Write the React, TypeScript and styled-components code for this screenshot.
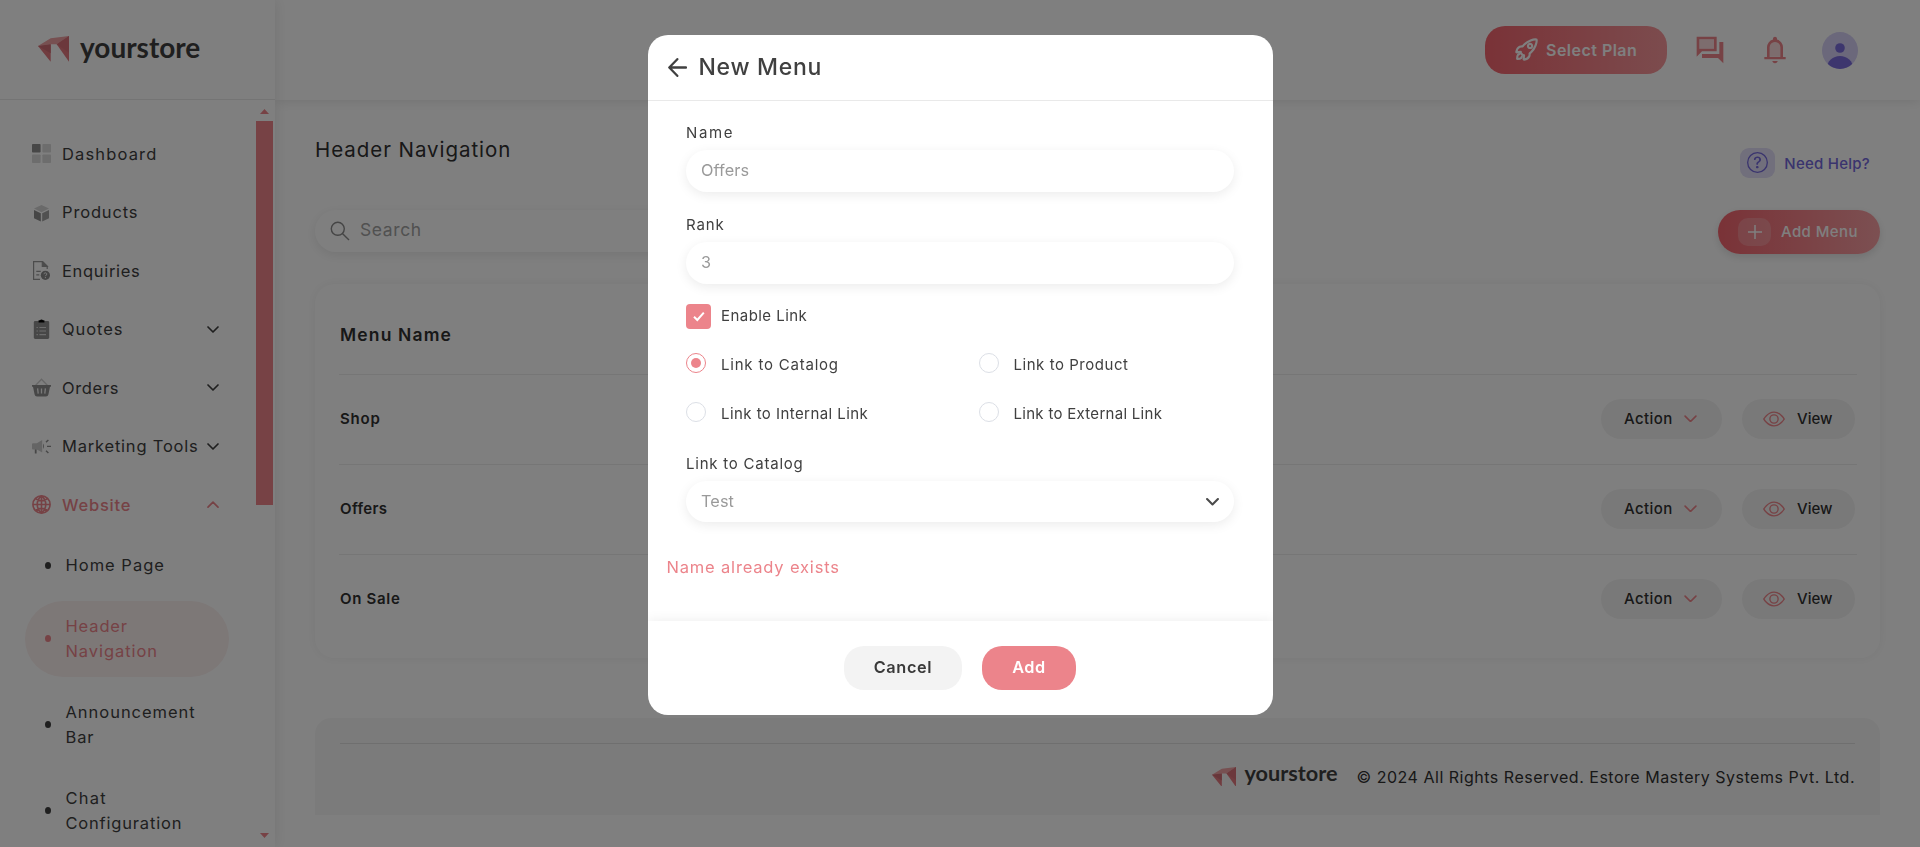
import React from "react";
import styled, { createGlobalStyle } from "styled-components";
import { BsEye, BsQuestionCircle } from "react-icons/bs";
import { IoRocketOutline } from "react-icons/io5";

const PINK = "#ec848b";
const INK = "#3f3f3f";

const GlobalStyle = createGlobalStyle`
  * { box-sizing: border-box; }
  body { margin: 0; background: #fff; overflow: hidden; }
  button, input { font: inherit; border: 0; margin: 0; }
  svg { display: block; flex: none; }
`;

const Shell = styled.div`
  display: flex;
  height: 847px;
  overflow: hidden;
  font-family: Inter, "Noto Sans", sans-serif;
  font-size: 16px;
  color: ${INK};
  background: #fff;
`;

const Txt = styled.span<{ $ls?: number }>`
  letter-spacing: ${(p) => p.$ls ?? 0}px;
  white-space: nowrap;
`;

/* ---------- sidebar ---------- */
const Sidebar = styled.aside`
  flex: none;
  width: 275px;
  display: flex;
  flex-direction: column;
  background: #fff;
  box-shadow: 0 0 14px rgba(0, 0, 0, 0.1);
  z-index: 2;
`;
const Brand = styled.div`
  flex: none;
  height: 100px;
  padding: 0 0 1px 38px;
  display: flex;
  align-items: center;
  border-bottom: 1px solid #e8e8e8;
`;
const Wordmark = styled.span<{ $size: number; $gap: number }>`
  font-family: Lato, sans-serif;
  font-weight: 700;
  font-size: ${(p) => p.$size}px;
  line-height: 1;
  margin-left: ${(p) => p.$gap}px;
  padding-bottom: 5px;
  color: ${INK};
`;
const SideScroll = styled.div`
  flex: 1;
  min-height: 0;
  display: flex;
  justify-content: space-between;
  padding-right: 2px;
`;
const SideList = styled.nav`
  width: 256px;
  padding-top: 24.5px;
  overflow: hidden;
`;
const SideItem = styled.div<{ $active?: boolean }>`
  height: 58.5px;
  padding: 0 37px 0 32px;
  display: flex;
  align-items: center;
  font-size: 16.5px;
  font-weight: ${(p) => (p.$active ? 500 : 400)};
  color: ${(p) => (p.$active ? PINK : INK)};
  svg:first-child { margin-right: 11px; }
  svg:last-child { margin-left: auto; }
`;
const SubList = styled.div`
  display: flex;
  flex-direction: column;
  gap: 10px;
  padding: 6px 27px 0 25px;
  font-size: 16.5px;
`;
const SubItem = styled.div<{ $active?: boolean }>`
  flex: none;
  display: flex;
  align-items: center;
  padding: 13px 20px;
  border-radius: 38px;
  line-height: 25px;
  color: ${(p) => (p.$active ? PINK : INK)};
  background: ${(p) => (p.$active ? "#fbf0ef" : "transparent")};
`;
const Bullet = styled.i`
  flex: none;
  width: 6px;
  height: 7px;
  border-radius: 50%;
  background: currentColor;
  margin: 0 14.5px 1px 0;
`;
const SubLabel = styled.div`
  display: flex;
  flex-direction: column;
`;
const ScrollTrack = styled.div`
  width: 17px;
  display: flex;
  flex-direction: column;
  align-items: center;
  padding: 9px 0;
`;
const ScrollThumb = styled.div`
  width: 17px;
  height: 384px;
  margin: 7px 0 auto;
  background: #ee848a;
`;

/* ---------- top bar ---------- */
const Main = styled.div`
  flex: 1;
  display: flex;
  flex-direction: column;
`;
const TopBar = styled.header`
  flex: none;
  height: 100px;
  padding-right: 62px;
  display: flex;
  align-items: center;
  justify-content: flex-end;
  background: #fff;
  box-shadow: 0 0 12px rgba(0, 0, 0, 0.12);
`;
const PlanButton = styled.button`
  width: 182px;
  height: 48px;
  padding: 0 0 1px 29px;
  display: flex;
  align-items: center;
  gap: 7px;
  border-radius: 20px;
  color: #fff;
  font-weight: 600;
  background: linear-gradient(90deg, #f4656f, #f8989c);
  margin-right: 27px;
  path { stroke-width: 44px; }
`;
const TopIcon = styled.span<{ $mr: number }>`
  margin-right: ${(p) => p.$mr}px;
  color: #ee848a;
`;

/* ---------- content ---------- */
const Content = styled.main`
  padding: 38px 40px 0;
  display: flex;
  flex-direction: column;
`;
const TitleRow = styled.div`
  display: flex;
  justify-content: space-between;
  height: 72px;
`;
const Title = styled.h1`
  margin: 0;
  font-size: 20.5px;
  line-height: 24px;
  font-weight: 400;
  color: #303030;
`;
const Help = styled.div`
  display: flex;
  align-items: center;
  gap: 9px;
  height: 30px;
  margin: 10px 10px 0 0;
  font-size: 15px;
  font-weight: 500;
  color: #7468dc;
`;
const HelpBadge = styled.span`
  width: 35px;
  height: 30px;
  border-radius: 9px;
  display: grid;
  place-items: center;
  padding-bottom: 1px;
  background: #e2def8;
`;
const ToolRow = styled.div`
  display: flex;
  justify-content: space-between;
  height: 74px;
  align-items: flex-start;
`;
const Search = styled.div`
  width: 500px;
  height: 42px;
  border-radius: 21px;
  padding-left: 15px;
  display: flex;
  align-items: center;
  gap: 10px;
  font-size: 17.5px;
  color: #a2a2a2;
  box-shadow: 0 3px 12px rgba(0, 0, 0, 0.09);
`;
const SearchText = styled(Txt)`
  margin-top: -3px;
`;
const AddMenu = styled.button`
  width: 162px;
  height: 44px;
  border-radius: 22px;
  padding: 0 0 1px 20px;
  display: flex;
  align-items: center;
  gap: 10px;
  font-size: 15px;
  font-weight: 500;
  color: #fff;
  background: linear-gradient(90deg, #f4656f, #f8a0a4);
  box-shadow: 0 3px 8px rgba(0, 0, 0, 0.12);
`;
const PlusBox = styled.span`
  width: 33px;
  height: 28px;
  border-radius: 10px;
  display: grid;
  place-items: center;
  background: rgba(255, 255, 255, 0.2);
`;
const Card = styled.section`
  height: 374px;
  padding: 0 23px 0 24px;
  border-radius: 20px;
  box-shadow: 0 0 12px rgba(0, 0, 0, 0.06);
`;
const TableHead = styled.div`
  height: 90px;
  padding: 11px 0 0 1px;
  display: flex;
  align-items: center;
  font-size: 17.5px;
  font-weight: 600;
  color: #303030;
`;
const TableRow = styled.div`
  height: 90px;
  padding: 0 2px 1px 1px;
  display: flex;
  align-items: center;
  border-top: 1px solid #ececec;
  font-size: 15px;
  font-weight: 600;
  color: #303030;
`;
const Pill = styled.button<{ $w: number; $pl: number; $gap: number }>`
  width: ${(p) => p.$w}px;
  height: 40px;
  padding: 0 0 1px ${(p) => p.$pl}px;
  display: flex;
  align-items: center;
  gap: ${(p) => p.$gap}px;
  border-radius: 20px;
  font-weight: 500;
  color: #303030;
  background: #f3f3f3;
  svg { color: #ee848a; }
`;
const RowName = styled(Txt)`
  margin-right: auto;
  padding-bottom: 1px;
`;
const Spacer = styled.span`
  width: 20px;
`;
const Footer = styled.footer`
  height: 97px;
  margin-top: 60px;
  padding: 25px 25px 0;
  border-radius: 16px 16px 0 0;
  background: #f7f7f7;
`;
const FooterInner = styled.div`
  height: 68px;
  padding-bottom: 2px;
  border-top: 1px solid #dfdfdf;
  display: flex;
  align-items: center;
  justify-content: flex-end;
  color: #303030;
`;
const FooterText = styled(Txt)`
  margin-left: 19px;
`;

/* ---------- dialog ---------- */
const Overlay = styled.div`
  position: fixed;
  inset: 0;
  z-index: 10;
  padding: 35px 0 0 1px;
  display: flex;
  justify-content: center;
  align-items: flex-start;
  background: rgba(0, 0, 0, 0.5);
`;
const Dialog = styled.div`
  width: 625px;
  height: 680px;
  display: flex;
  flex-direction: column;
  border-radius: 20px;
  overflow: hidden;
  background: #fff;
  color: #404040;
  font-family: Inter, "Noto Sans", sans-serif;
`;
const DialogHead = styled.div`
  flex: none;
  height: 66px;
  padding: 0 0 1px 20px;
  display: flex;
  align-items: center;
  gap: 11.5px;
  border-bottom: 1px solid #e9e9e9;
  font-size: 23px;
  font-weight: 500;
`;
const DialogBody = styled.div`
  flex: 1;
  padding: 22px 39px 0 38px;
  font-size: 15px;
`;
const Label = styled.div`
  line-height: 20px;
  margin-bottom: 7px;
`;
const Control = styled.div<{ $h?: number; $mb: number }>`
  height: ${(p) => p.$h ?? 42}px;
  margin-bottom: ${(p) => p.$mb}px;
  padding: 0 14px 2px 15px;
  border-radius: 21px;
  display: flex;
  align-items: center;
  justify-content: space-between;
  font-size: 16.3px;
  color: #9a9a9a;
  box-shadow: 0 3px 12px rgba(0, 0, 0, 0.08);
`;
const SelectArrow = styled.span`
  margin: 3px 1px 0 0;
  color: #4a4a4a;
`;
const CheckRow = styled.div`
  display: flex;
  gap: 10px;
  height: 25px;
  line-height: 24px;
  margin-bottom: 24px;
`;
const CheckBox = styled.span`
  width: 25px;
  height: 25px;
  border-radius: 4px;
  display: grid;
  place-items: center;
  background: ${PINK};
`;
const Radios = styled.div`
  display: grid;
  grid-template-columns: 292.5px 1fr;
  row-gap: 29px;
  margin-bottom: 32px;
`;
const RadioRow = styled.div`
  display: flex;
  gap: 15px;
  height: 20px;
  line-height: 24px;
`;
const RadioDot = styled.span<{ $on?: boolean }>`
  width: 20px;
  height: 20px;
  border-radius: 50%;
  border: 1px solid ${(p) => (p.$on ? PINK : "#dcdfe6")};
  display: grid;
  place-items: center;
  &::after {
    content: "";
    width: 10px;
    height: 10px;
    border-radius: 50%;
    background: ${(p) => (p.$on ? PINK : "transparent")};
  }
`;
const ErrorLine = styled.div`
  margin: -1px 0 0 -19.5px;
  font-size: 16.5px;
  line-height: 24px;
  color: ${PINK};
`;
const DialogFoot = styled.div`
  flex: none;
  height: 94px;
  padding-right: 1px;
  display: flex;
  align-items: center;
  justify-content: center;
  gap: 20px;
  box-shadow: 0 0 12px rgba(0, 0, 0, 0.08);
`;
const DialogButton = styled.button<{ $primary?: boolean }>`
  width: ${(p) => (p.$primary ? 94 : 118)}px;
  height: 44px;
  padding: 0 0 2px;
  border-radius: 20px;
  font-size: 16.3px;
  font-weight: 600;
  color: ${(p) => (p.$primary ? "#fff" : "#3a3a3a")};
  background: ${(p) => (p.$primary ? PINK : "#f3f3f3")};
`;

/* ---------- drawings ---------- */
const LogoMark = ({ w }: { w: number }) => (
  <svg width={w} height={(w * 77) / 93} viewBox="0 0 93 77">
    <path d="M0 30 38 7 93 0 56 25H38Z" fill="#eea0a3" />
    <path d="M0 30 38 25V77Z" fill="#e2787f" />
    <path d="M0 30 38 25V52Z" fill="#cf6d74" />
    <path d="M93 0V77L56 25Z" fill="#e2787f" />
    <path d="M93 0 56 25 93 50Z" fill="#d97178" />
  </svg>
);

const Chevron = ({ w, sw, up }: { w: number; sw: number; up?: boolean }) => (
  <svg width={w} height={w * 0.6} viewBox="0 0 12 7.2" fill="none" stroke="currentColor" strokeWidth={sw} strokeLinecap="round" strokeLinejoin="round">
    <path d={up ? "M1 6.2 6 1.2l5 5" : "M1 1l5 5 5-5"} />
  </svg>
);

const sideIcons: Record<string, React.ReactNode> = {
  Dashboard: (
    <svg width="19" height="19" viewBox="0 0 19 19">
      <rect width="8.6" height="8.6" rx="0.8" fill="#8f8f8f" />
      <g fill="#dadada">
        <rect x="10.4" width="8.6" height="8.6" rx="0.8" />
        <rect y="10.4" width="8.6" height="8.6" rx="0.8" />
        <rect x="10.4" y="10.4" width="8.6" height="8.6" rx="0.8" />
      </g>
    </svg>
  ),
  Products: (
    <svg width="19" height="19" viewBox="0 0 19 19">
      <path d="M9.5 2 17 5.6 9.5 9.2 2 5.6Z" fill="#d4d4d4" />
      <path d="M2 7 8.8 10.3V18.6L2 15.2Z" fill="#8c8c8c" />
      <path d="M17 7 10.2 10.3V18.6L17 15.2Z" fill="#a2a2a2" />
    </svg>
  ),
  Enquiries: (
    <svg width="19" height="19" viewBox="0 0 19 19" fill="none" stroke="#999" strokeWidth="1.2">
      <path d="M15.2 8V5.2L10.6.6H1.6V18.4H8" />
      <path d="M10.3.6V5.4H15.2Z" fill="#999" />
      <path d="M4.3 10.4h4.4M4.3 13.9h3" />
      <circle cx="13.4" cy="14.3" r="4.6" fill="#8a8a8a" stroke="none" />
      <path d="M12 13.2c0-1.9 2.9-1.8 2.8 0 0 .9-1.4 1-1.4 2M13.4 16.1v1.1" stroke="#fff" strokeWidth="1" />
    </svg>
  ),
  Quotes: (
    <svg width="19" height="20" viewBox="0 0 19 20">
      <rect x="1.8" y="2" width="15.4" height="18" rx="1.4" fill="#8e8e8e" />
      <path d="M6.6 1.3H8a1.6 1.3 0 0 1 3 0h1.4V3.4H6.6Z" fill="#000" />
      <path d="M4.5 8.5h1.4M7.4 8.5h6.6M4.5 12h1.4M7.4 12h6.6M4.5 15.6h1.4M7.4 15.6h6.6" stroke="#d9d9d9" strokeWidth="1.1" />
    </svg>
  ),
  Orders: (
    <svg width="19" height="19" viewBox="0 0 19 19">
      <path d="M3.5 7.5 9.5 1.2l6 6.3" fill="none" stroke="#cfcfcf" strokeWidth="1.3" />
      <path d="M0 7h19v1.8h-1L16.4 16.6Q16 18.5 14 18.5H5Q3 18.5 2.6 16.6L1 8.8H0Z" fill="#8e8e8e" />
      <path d="M5.6 10.4 6.2 15.6M9.5 10.4v5.2M13.4 10.4 12.8 15.6" stroke="#f5f5f5" strokeWidth="1.3" />
    </svg>
  ),
  "Marketing Tools": (
    <svg width="19" height="17" viewBox="0 0 19 17">
      <path d="M0 6.2Q0 5.2 1 5.2H4.8L10.2 2V14.5L4.8 11.4H1Q0 11.4 0 10.4Z" fill="#cbcbcb" />
      <path d="M2.8 11.4H4.6V15.5H2.8Z" fill="#8e8e8e" />
      <path d="M11 5.6Q13 8.2 11 11Z" fill="#999" />
      <path d="M14 4.1 16.4 2M15 8.4h4M14 12.8 16.4 15" stroke="#8e8e8e" strokeWidth="1.4" />
    </svg>
  ),
  Website: (
    <svg width="19" height="19" viewBox="0 0 19 19" fill="none" stroke={PINK} strokeWidth="1.6">
      <circle cx="9.5" cy="9.5" r="8.6" />
      <path d="M9.5 1v17M1 9.5h17M3.6 3.6C6.8 6.3 12.2 6.3 15.4 3.6M3.6 15.4c3.2-2.7 8.6-2.7 11.8 0M9.5 1C3.8 5 3.8 14 9.5 18M9.5 1c5.7 4 5.7 13 0 17" />
    </svg>
  ),
};

const ChatIcon = () => (
  <svg width="32" height="32" viewBox="0 0 24 24" fill="currentColor">
    <path d="M4 4h11v7H4z" opacity="0.3" />
    <path d="M6 18v-3h13V6h3v16l-4-4zm-4-1V2h15v11H6zm13-6V4H4v7z" />
  </svg>
);

const BellIcon = () => (
  <svg width="32" height="32" viewBox="0 0 24 24" fill="currentColor">
    <path d="M8 17h8v-7q0-1.65-1.175-2.825T12 6T9.175 7.175T8 10z" opacity="0.3" />
    <path d="M4 19v-1.7h2v-7.3q0-2.075 1.25-3.687T10.5 4.2v-.7q0-.625.438-1.062T12 2t1.063.438T13.5 3.5v.7q2 .5 3.25 2.113T18 10v7.3h2V19zm8 3q-.825 0-1.412-.587T10 20.3h4q0 .525-.587 1.113T12 22m-4-4.7h8v-7.3q0-1.65-1.175-2.825T12 6T9.175 7.175T8 10z" />
  </svg>
);

const Avatar = () => (
  <svg width="36" height="37" viewBox="0 0 36 37">
    <clipPath id="face"><ellipse cx="18" cy="18.5" rx="18" ry="18.5" /></clipPath>
    <g clipPath="url(#face)">
      <rect width="36" height="37" fill="#d6d0f6" />
      <circle cx="18" cy="16" r="4.8" fill="#7a6cdc" />
      <ellipse cx="18" cy="36" rx="13" ry="12" fill="#7a6cdc" />
    </g>
  </svg>
);

const menu: { name: string; ls: number; chevron?: boolean; active?: boolean }[] = [
  { name: "Dashboard", ls: 1.15 },
  { name: "Products", ls: 0.85 },
  { name: "Enquiries", ls: 0.68 },
  { name: "Quotes", ls: 0.92 },
  { name: "Orders", ls: 0.65 },
  { name: "Marketing Tools", ls: 0.79 },
  { name: "Website", ls: 0.77, active: true },
].map((m, i) => ({ ...m, chevron: i > 2 }));

const subMenu: { lines: [string, number][]; active?: boolean }[] = [
  { lines: [["Home Page", 1]] },
  { lines: [["Header", 0.86], ["Navigation", 0.93]], active: true },
  { lines: [["Announcement", 0.97], ["Bar", 0.9]] },
  { lines: [["Chat", 1.25], ["Configuration", 0.81]] },
];

const rows: [string, number][] = [["Shop", 0.81], ["Offers", 0.35], ["On Sale", 0.7]];

const linkTypes: { name: string; ls: number; on?: boolean }[] = [
  { name: "Link to Catalog", ls: 0.79, on: true },
  { name: "Link to Product", ls: 0.54 },
  { name: "Link to Internal Link", ls: 0.44 },
  { name: "Link to External Link", ls: 0.29 },
];

export default function App() {
  return (
    <>
      <GlobalStyle />
      <Shell>
        <Sidebar>
          <Brand>
            <LogoMark w={31} />
            <Wordmark $size={28} $gap={11}>yourstore</Wordmark>
          </Brand>
          <SideScroll>
            <SideList>
              {menu.map((m) => (
                <SideItem key={m.name} $active={m.active}>
                  {sideIcons[m.name]}
                  <Txt $ls={m.ls}>{m.name}</Txt>
                  {m.chevron && <Chevron w={12} sw={1.7} up={m.active} />}
                </SideItem>
              ))}
              <SubList>
                {subMenu.map((s) => (
                  <SubItem key={s.lines[0][0]} $active={s.active}>
                    <Bullet />
                    <SubLabel>
                      {s.lines.map(([t, ls]) => (
                        <Txt key={t} $ls={ls}>{t}</Txt>
                      ))}
                    </SubLabel>
                  </SubItem>
                ))}
              </SubList>
            </SideList>
            <ScrollTrack>
              <svg width="9" height="5" viewBox="0 0 9 5"><path d="M0 5 4.5 0 9 5Z" fill="#ee848a" /></svg>
              <ScrollThumb />
              <svg width="9" height="5" viewBox="0 0 9 5"><path d="M0 0 4.5 5 9 0Z" fill="#ee848a" /></svg>
            </ScrollTrack>
          </SideScroll>
        </Sidebar>

        <Main>
          <TopBar>
            <PlanButton>
              <IoRocketOutline size={25} />
              <Txt $ls={0.48}>Select Plan</Txt>
            </PlanButton>
            <TopIcon $mr={33}><ChatIcon /></TopIcon>
            <TopIcon $mr={31}><BellIcon /></TopIcon>
            <Avatar />
          </TopBar>

          <Content>
            <TitleRow>
              <Title><Txt $ls={0.95}>Header Navigation</Txt></Title>
              <Help>
                <HelpBadge><BsQuestionCircle size={21} /></HelpBadge>
                <Txt $ls={0.25}>Need Help?</Txt>
              </Help>
            </TitleRow>
            <ToolRow>
              <Search>
                <svg width="20" height="20" viewBox="0 0 20 20" fill="none" stroke="#8a8a8a" strokeWidth="1.4">
                  <circle cx="7.8" cy="7.8" r="6.5" />
                  <path d="M12.4 12.4 19 19" />
                </svg>
                <SearchText $ls={0.6}>Search</SearchText>
              </Search>
              <AddMenu>
                <PlusBox>
                  <svg width="14" height="14" viewBox="0 0 14 14" stroke="#fff" strokeWidth="1.5"><path d="M7 0v14M0 7h14" /></svg>
                </PlusBox>
                <Txt $ls={0.4}>Add Menu</Txt>
              </AddMenu>
            </ToolRow>

            <Card>
              <TableHead><Txt $ls={1.15}>Menu Name</Txt></TableHead>
              {rows.map(([name, ls]) => (
                <TableRow key={name}>
                  <RowName $ls={ls}>{name}</RowName>
                  <Pill $w={121} $pl={23} $gap={11}>
                    <Txt $ls={0.42}>Action</Txt>
                    <Chevron w={13} sw={1.5} />
                  </Pill>
                  <Spacer />
                  <Pill $w={113} $pl={21} $gap={12}>
                    <BsEye size={22} />
                    <Txt>View</Txt>
                  </Pill>
                </TableRow>
              ))}
            </Card>

            <Footer>
              <FooterInner>
                <LogoMark w={24} />
                <Wordmark $size={21.7} $gap={8}>yourstore</Wordmark>
                <FooterText $ls={0.51}>© 2024 All Rights Reserved. Estore Mastery Systems Pvt. Ltd.</FooterText>
              </FooterInner>
            </Footer>
          </Content>
        </Main>
      </Shell>

      <Overlay>
        <Dialog role="dialog" aria-label="New Menu">
          <DialogHead>
            <svg width="19" height="19" viewBox="0 0 19 19" fill="none" stroke="#404040" strokeWidth="2.3" strokeLinecap="round" strokeLinejoin="round">
              <path d="M18 9.5H1.4M9.3 1.2 1.3 9.5l8 8.3" />
            </svg>
            <Txt $ls={0.71}>New Menu</Txt>
          </DialogHead>
          <DialogBody>
            <Label><Txt $ls={1.6}>Name</Txt></Label>
            <Control $mb={23}><Txt $ls={0.1}>Offers</Txt></Control>
            <Label><Txt $ls={0.88}>Rank</Txt></Label>
            <Control $mb={20}><Txt>3</Txt></Control>
            <CheckRow>
              <CheckBox>
                <svg width="12" height="11" viewBox="0 0 12 11" fill="none" stroke="#fff" strokeWidth="2"><path d="M1 5.8 4.3 9 10.8 1.6" /></svg>
              </CheckBox>
              <Txt $ls={0.45}>Enable Link</Txt>
            </CheckRow>
            <Radios>
              {linkTypes.map((l) => (
                <RadioRow key={l.name}>
                  <RadioDot $on={l.on} />
                  <Txt $ls={l.ls}>{l.name}</Txt>
                </RadioRow>
              ))}
            </Radios>
            <Label><Txt $ls={0.77}>Link to Catalog</Txt></Label>
            <Control $h={41} $mb={34}>
              <Txt $ls={0.1}>Test</Txt>
              <SelectArrow><Chevron w={13} sw={1.9} /></SelectArrow>
            </Control>
            <ErrorLine><Txt $ls={0.82}>Name already exists</Txt></ErrorLine>
          </DialogBody>
          <DialogFoot>
            <DialogButton><Txt $ls={0.65}>Cancel</Txt></DialogButton>
            <DialogButton $primary><Txt $ls={0.6}>Add</Txt></DialogButton>
          </DialogFoot>
        </Dialog>
      </Overlay>
    </>
  );
}
